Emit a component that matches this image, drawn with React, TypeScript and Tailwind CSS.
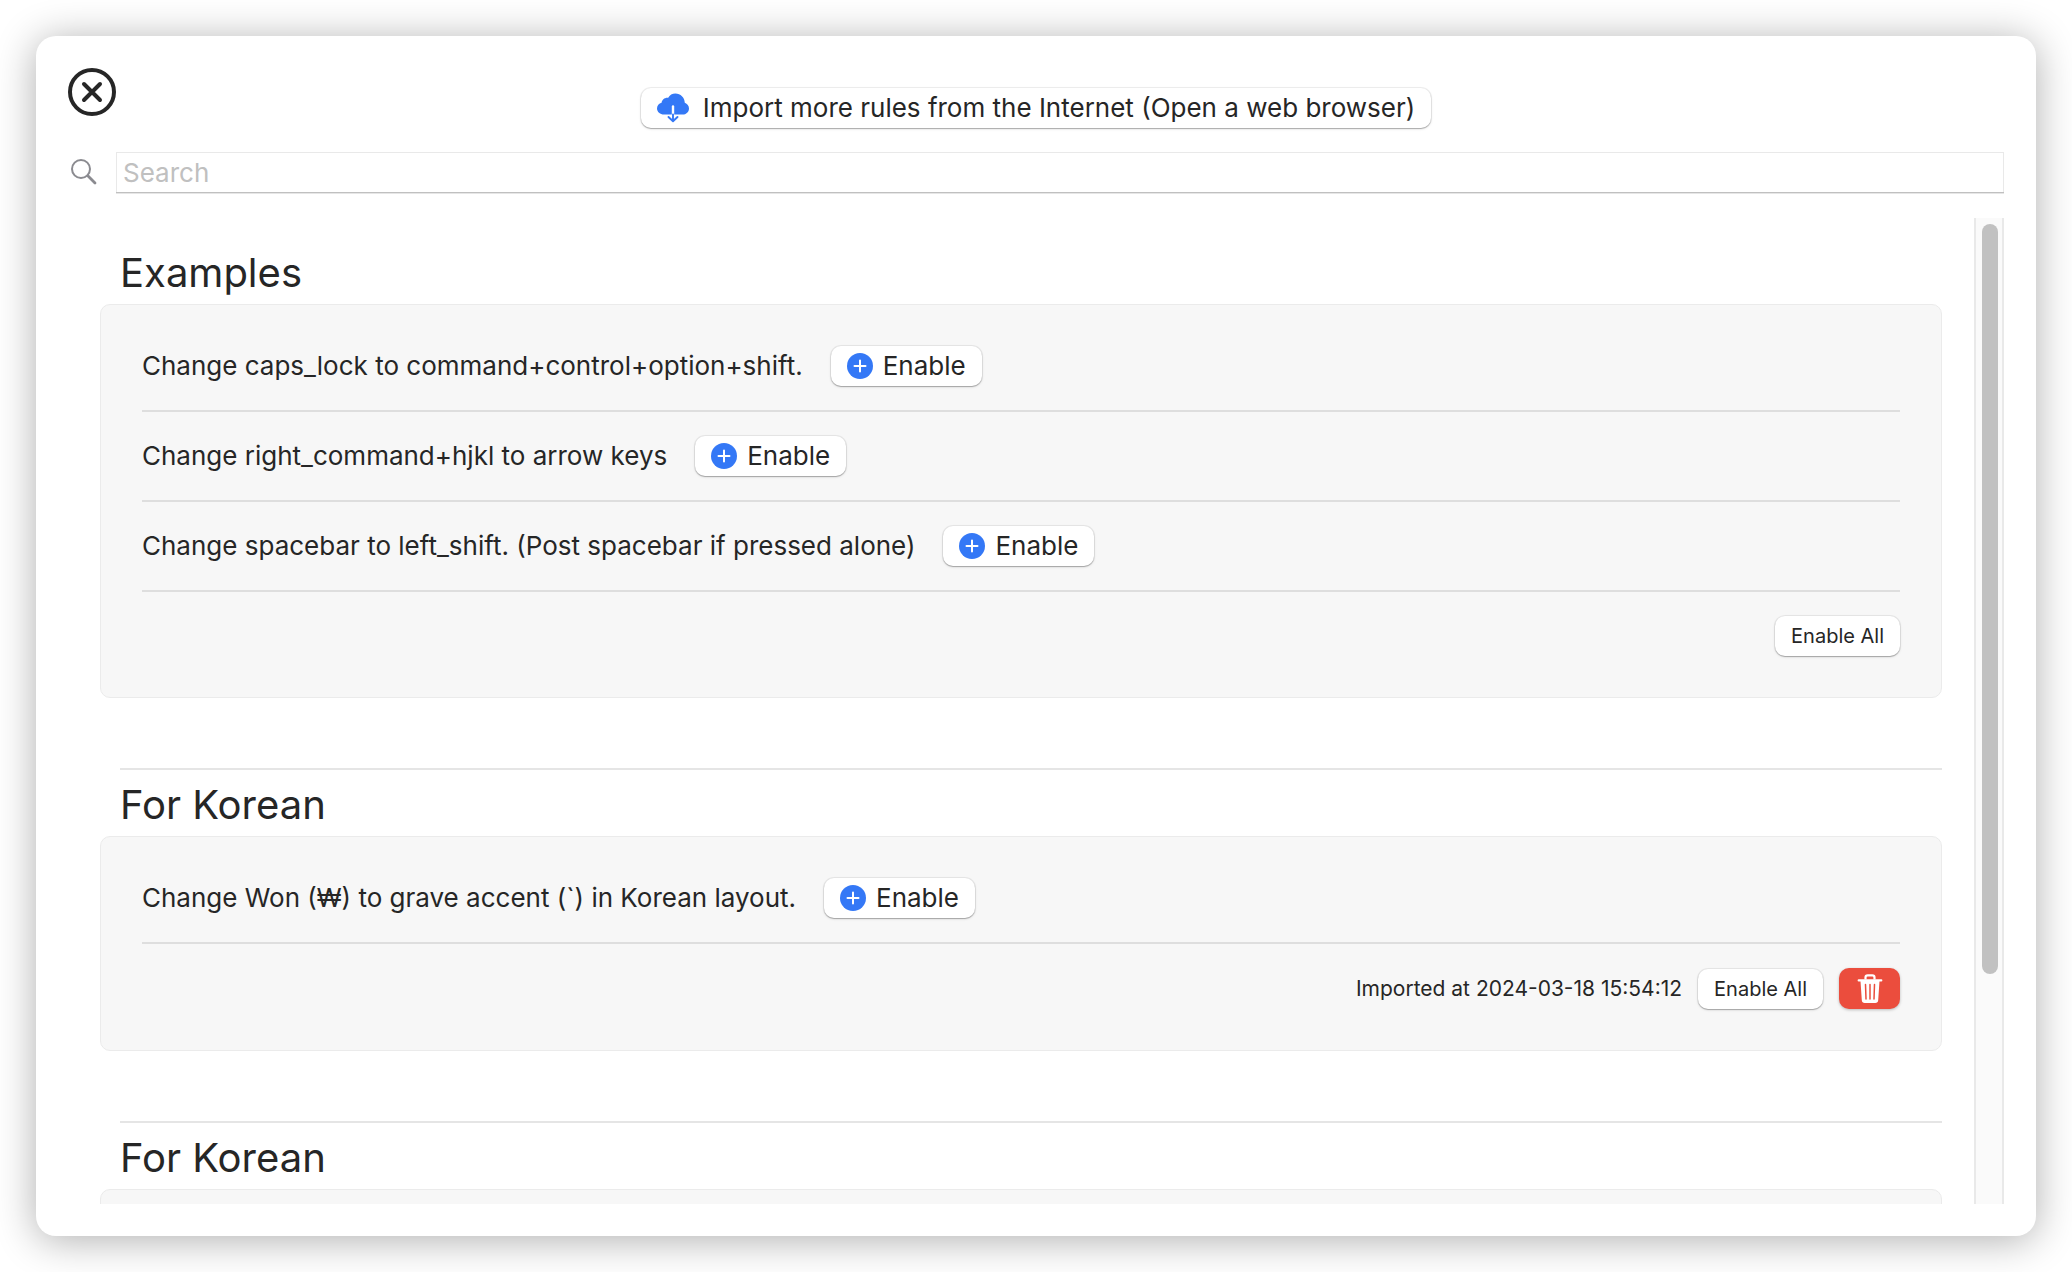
import { useState } from "react";
import clsx from "clsx";

interface RuleGroup {
  id: number;
  title: string;
  rules: string[];
  importedAt?: string;
}

const groups: RuleGroup[] = [
  {
    id: 1,
    title: "Examples",
    rules: [
      "Change caps_lock to command+control+option+shift.",
      "Change right_command+hjkl to arrow keys",
      "Change spacebar to left_shift. (Post spacebar if pressed alone)",
    ],
  },
  {
    id: 2,
    title: "For Korean",
    rules: ["Change Won (₩) to grave accent (`) in Korean layout."],
    importedAt: "2024-03-18 15:54:12",
  },
  { id: 3, title: "For Korean", rules: [] },
];

const BUTTON =
  "flex h-10 shrink-0 items-center rounded-[10px] bg-white shadow-[0_0_0_1px_rgba(0,0,0,0.06),0_1px_1px_rgba(0,0,0,0.22),0_1px_3px_rgba(0,0,0,0.12)] active:bg-[#f0f0f0]";

export default function App() {
  const [query, setQuery] = useState("");

  const visible = groups.filter(
    (g) =>
      query === "" ||
      g.title.toLowerCase().includes(query.toLowerCase()) ||
      g.rules.some((r) => r.toLowerCase().includes(query.toLowerCase()))
  );

  return (
    <div className="h-screen bg-white p-9 font-['Inter','Noto_Sans',sans-serif] text-[26px] leading-8 text-[#262626]">
      <main className="flex h-full flex-col rounded-[20px] bg-white p-8 shadow-[0_4px_40px_rgba(0,0,0,0.32)]">
        <header className="flex h-15 items-end justify-between">
          <button aria-label="Close" className="self-start">
            <CloseIcon />
          </button>
          <button className={clsx(BUTTON, "gap-[14px] px-4")}>
            <CloudIcon />
            Import more rules from the Internet (Open a web browser)
          </button>
          <div className="w-12" />
        </header>

        <div className="mt-6 flex items-center">
          <label htmlFor="search" className="w-12 shrink-0 pl-[3px]">
            <SearchIcon />
          </label>
          <input
            id="search"
            type="text"
            aria-label="Search"
            placeholder="Search"
            value={query}
            onChange={(e) => setQuery(e.target.value)}
            className="h-10 min-w-0 flex-1 border border-b-0 border-[#e9e9e9] px-[6px] shadow-[0_1px_0_#c0c0c0,0_2px_0_#e6e6e6] outline-none placeholder:text-[#c0c0c0]"
          />
        </div>

        <div className="mt-[26px] flex min-h-0 flex-1 gap-8 pl-8">
          <div className="min-w-0 flex-1 overflow-hidden pt-5">
            {visible.map((group, index) => (
              <Group key={group.id} group={group} first={index === 0} />
            ))}
          </div>

          {/* Scroll track */}
          <div className="w-[30px] border-x-2 border-[#e9e9e9] bg-[#fafafa] px-[6px] pt-[6px]">
            <div className="h-[76.5%] w-4 rounded-full bg-[#c1c1c1]" />
          </div>
        </div>
      </main>
    </div>
  );
}

function Group({ group, first }: { group: RuleGroup; first: boolean }) {
  return (
    <section>
      {!first && <hr className="mt-[70px] ml-5 border-t-2 border-[#e5e5e5]" />}
      <h2 className="flex h-[66px] items-center pt-1 pl-5 text-[40px] leading-none">{group.title}</h2>
      <div className="rounded-[10px] border border-[#ebebeb] bg-[#f7f7f7] p-[41px]">
        {group.rules.map((rule) => (
          <div key={rule} className="mb-6 flex items-center gap-7 border-b-2 border-[#dedede] pb-6">
            <span>{rule}</span>
            <button className={clsx(BUTTON, "gap-[10px] px-4")}>
              <PlusIcon />
              Enable
            </button>
          </div>
        ))}
        {group.rules.length > 0 && (
          <div className="flex items-center justify-end gap-4 text-[21px]">
            {group.importedAt && <span>Imported at {group.importedAt}</span>}
            <button className={clsx(BUTTON, "px-4 text-xl")}>Enable All</button>
            {group.importedAt && (
              <button
                aria-label="Delete"
                className="flex h-[41px] w-[61px] items-center justify-center rounded-[10px] bg-[#eb4d3d] shadow-[0_1px_3px_rgba(0,0,0,0.25)]"
              >
                <TrashIcon />
              </button>
            )}
          </div>
        )}
      </div>
    </section>
  );
}

/* ── Icons ── */

function CloseIcon() {
  return (
    <svg width="48" height="48" viewBox="0 0 48 48" fill="none" stroke="#262626" strokeWidth="4">
      <circle cx="24" cy="24" r="22" />
      <path d="M16 16 32 32M32 16 16 32" strokeLinecap="round" />
    </svg>
  );
}

function SearchIcon() {
  return (
    <svg width="26" height="26" viewBox="0 0 26 26" fill="none" stroke="#8b8b90">
      <circle cx="10" cy="10" r="9" strokeWidth="2" />
      <path d="M16.8 16.8 24 24" strokeWidth="2.8" strokeLinecap="round" />
    </svg>
  );
}

function CloudIcon() {
  return (
    <svg width="32" height="30" viewBox="0 0 32 30" fill="none">
      <path
        d="M7 21.5C3.1 21.5 0 18.9 0 15.5 0 12.7 1.9 10.5 4.6 9.8 4.8 6.7 7.7 4.3 11.2 4.7 12.7 2.1 15.3.5 18.4.5 23.6.5 27.6 4.5 27.8 9.7 30.3 10.6 32 12.8 32 15.4 32 18.9 29.2 21.5 25.6 21.5Z"
        fill="#3478f6"
      />
      <path d="M16 13.5V21.5" stroke="#fff" strokeWidth="2.4" strokeLinecap="round" />
      <path d="M16 21.5V28M11.5 24 16 28.3 20.5 24" stroke="#3478f6" strokeWidth="1.9" strokeLinecap="round" strokeLinejoin="round" />
    </svg>
  );
}

function PlusIcon() {
  return (
    <svg width="26" height="26" viewBox="0 0 26 26" fill="none">
      <circle cx="13" cy="13" r="13" fill="#3478f6" />
      <path d="M13 7.5V18.5M7.5 13H18.5" stroke="#fff" strokeWidth="2" strokeLinecap="round" />
    </svg>
  );
}

function TrashIcon() {
  return (
    <svg width="26" height="30" viewBox="0 0 26 30" fill="none">
      <path d="M8.5 5.5V3.5C8.5 2.2 9.3 1.3 10.7 1.3H15.3C16.7 1.3 17.5 2.2 17.5 3.5V5.5" stroke="#fff" strokeWidth="2.2" />
      <path d="M1.7 6.4H24.3" stroke="#fff" strokeWidth="2.2" strokeLinecap="round" />
      <path d="M3.5 7 4.8 26.2C4.9 28 6 29 7.7 29H18.3C20 29 21.1 28 21.2 26.2L22.5 7Z" fill="#fff" />
      <path d="M8.5 10.5 9 25M13 10.5V25M17.5 10.5 17 25" stroke="#eb4d3d" strokeWidth="1.5" strokeLinecap="round" />
    </svg>
  );
}
